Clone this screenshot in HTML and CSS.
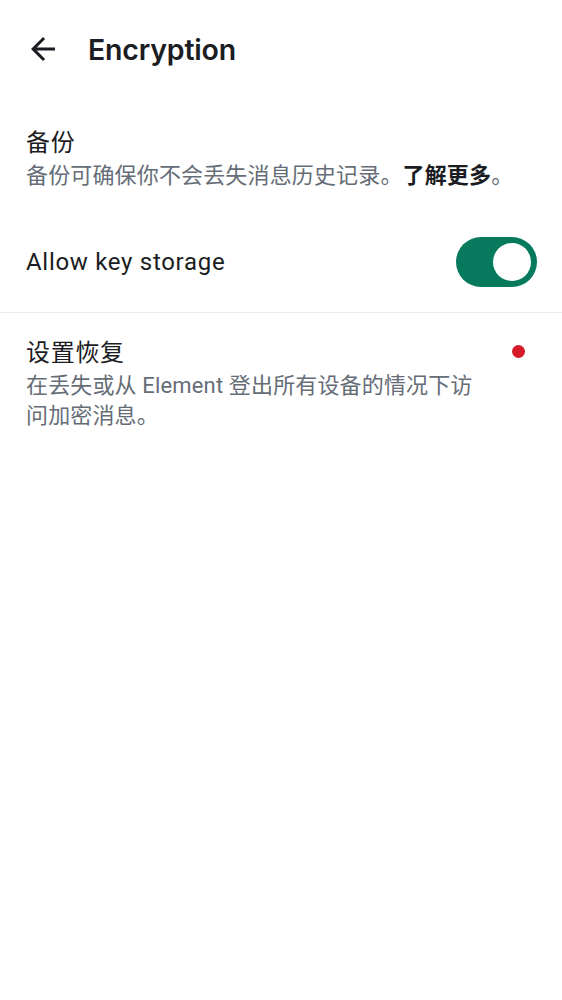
FILE: index.html
```html
<!DOCTYPE html>
<html lang="zh">
<head>
<meta charset="utf-8">
<link rel="stylesheet" href="styles.css">
</head>
<body>
<div class="screen">
  <header class="topbar">
    <span class="back">
      <svg width="36" height="36" viewBox="0 0 24 24"><path d="M20 11H7.83l5.59-5.59L12 4l-8 8 8 8 1.41-1.41L7.83 13H20v-2z" fill="#1b1d22"/></svg>
    </span>
    <h1 class="title">Encryption</h1>
  </header>

  <section class="item item-backup">
    <div class="text">
      <div class="item-title">备份</div>
      <div class="item-sub">备份可确保你不会丢失消息历史记录。<b>了解更多</b>。</div>
    </div>
  </section>

  <section class="item item-toggle">
    <div class="text">
      <div class="item-title">Allow key storage</div>
    </div>
    <div class="switch"><span class="thumb"></span></div>
  </section>

  <div class="divider"></div>

  <section class="item item-recovery">
    <div class="text">
      <div class="item-title">设置恢复</div>
      <div class="item-sub">在丢失或从 Element 登出所有设备的情况下访问加密消息。</div>
    </div>
    <div class="trail"><span class="dot"></span></div>
  </section>
</div>
</body>
</html>
```

FILE: styles.css
```css
html, body {
  margin: 0;
  padding: 0;
  background: #ffffff;
}
body {
  font-family: Roboto, "Noto Sans CJK SC", sans-serif;
  color: #1b1d22;
}
.screen {
  width: 562px;
  min-height: 1000px;
  display: flex;
  flex-direction: column;
}
.topbar {
  height: 98px;
  display: flex;
  align-items: center;
  padding-left: 25px;
  gap: 27px;
  box-sizing: border-box;
}
.back {
  width: 36px;
  height: 36px;
  display: flex;
}
.title {
  margin: 0;
  font-family: Inter, "Noto Sans CJK SC", sans-serif;
  font-size: 28.5px;
  font-weight: 600;
  color: #1b1d22;
  letter-spacing: -0.2px;
}
.item {
  display: flex;
  padding: 0 24px 0 26px;
}
.text {
  flex: 1;
  min-width: 0;
}
.item-title {
  font-size: 24px;
  line-height: 36px;
  letter-spacing: 0.7px;
  color: #1b1d22;
}
.item-sub {
  font-size: 22px;
  line-height: 30px;
  letter-spacing: 0.15px;
  color: #656d77;
}
.item-sub b {
  color: #1b1d22;
  font-weight: 700;
}
.item-backup {
  padding-top: 27px;
  padding-bottom: 17px;
}
.item-toggle {
  padding-top: 18px;
  padding-bottom: 14px;
  height: 72px;
  align-items: center;
  box-sizing: content-box;
}
.switch {
  width: 81px;
  height: 50px;
  border-radius: 25px;
  background: #077a5e;
  display: flex;
  align-items: center;
  justify-content: flex-end;
  padding-right: 6px;
  box-sizing: border-box;
  margin-right: 1px;
}
.thumb {
  width: 38px;
  height: 38px;
  border-radius: 50%;
  background: #ffffff;
}
.divider {
  height: 1px;
  background: #e9ebee;
}
.item-recovery {
  padding-top: 22px;
  gap: 10px;
}
.trail {
  width: 40px;
  height: 36px;
  display: flex;
  align-items: center;
  justify-content: center;
}
.dot {
  width: 13px;
  height: 13px;
  border-radius: 50%;
  background: #d51a28;
  margin-top: -4px;
}
```
